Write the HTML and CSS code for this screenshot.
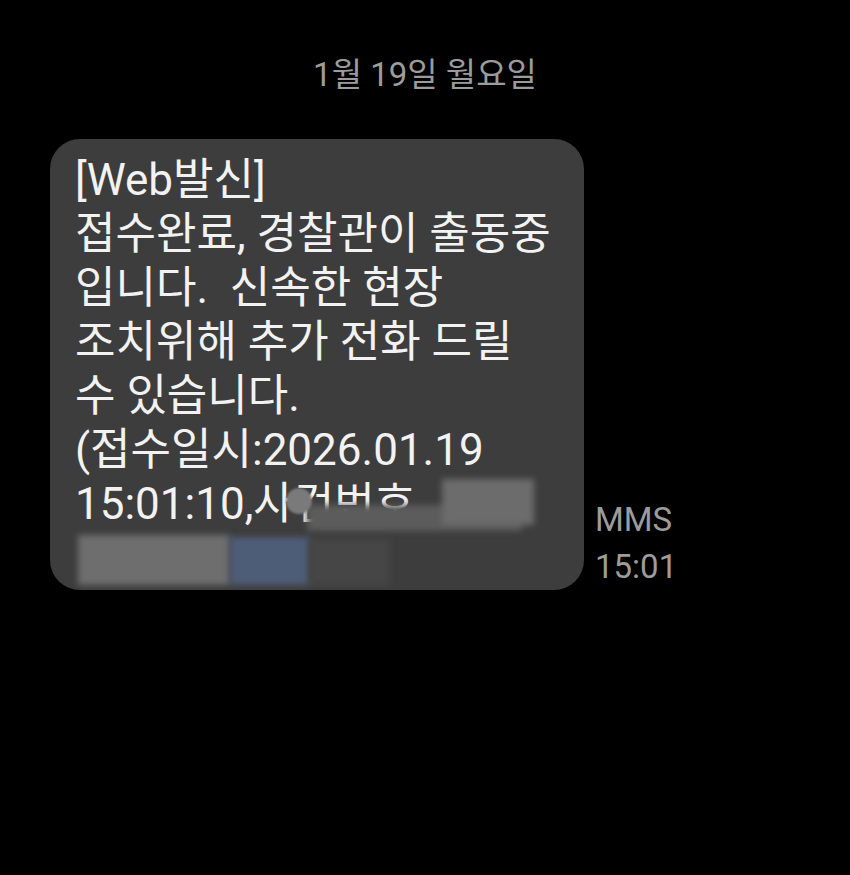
FILE: index.html
```html
<!DOCTYPE html>
<html lang="ko">
<head>
<meta charset="utf-8">
<link rel="stylesheet" href="styles.css">
</head>
<body>
<div class="screen">
  <div class="date">1월 19일 월요일</div>
  <div class="row">
    <div class="bubble">
      <div class="text">[Web발신]<br>접수완료, 경찰관이 출동중<br>입니다.&nbsp; 신속한 현장<br>조치위해 추가 전화 드릴<br>수 있습니다.<br>(접수일시:2026.01.19<br>15:01:10,사건번호<br>&nbsp;</div>
      <div class="blur b1"></div>
      <div class="blur b2"></div>
      <div class="blur b3"></div>
      <div class="blur b4"></div>
      <div class="blur b6"></div>
      <div class="blur b5"></div>
    </div>
    <div class="meta">MMS<br>15:01</div>
  </div>
</div>
</body>
</html>
```
FILE: styles.css
```css
html, body {
  margin: 0;
  padding: 0;
  background: #000;
}
.screen {
  width: 850px;
  height: 875px;
  background: #000;
  font-family: "Roboto", "Noto Sans CJK KR", sans-serif;
  overflow: hidden;
}
.date {
  text-align: center;
  color: #9c9c9c;
  font-size: 33px;
  line-height: 40px;
  padding-top: 55px;
  height: 84px;
  box-sizing: border-box;
}
.row {
  display: flex;
  align-items: flex-end;
  padding-left: 50px;
}
.bubble {
  position: relative;
  width: 534px;
  height: 451px;
  box-sizing: border-box;
  background: #3d3d3d;
  border-radius: 30px;
  padding: 14px 0 0 25px;
  overflow: hidden;
}
.date + .row {
  margin-top: 55px;
}
.text {
  color: #f2f2f2;
  font-size: 44px;
  line-height: 54px;
  white-space: nowrap;
}
.blur {
  position: absolute;
  filter: blur(3px);
}
.b1 {
  left: 257px; top: 366px; width: 215px; height: 26px;
  background: #5c5c5c;
}
.b2 {
  left: 392px; top: 340px; width: 92px; height: 46px;
  background: #6c6c6c;
}
.b3 {
  left: 28px; top: 396px; width: 152px; height: 50px;
  background: #6e6e6e;
}
.b4 {
  left: 180px; top: 398px; width: 80px; height: 48px;
  background: #4e5d77;
}
.b6 {
  left: 258px; top: 400px; width: 82px; height: 46px;
  background: #464646;
}
.b5 {
  left: 236px; top: 349px; width: 26px; height: 26px;
  border-radius: 50%;
  background: #7a7a7a;
  filter: blur(1px);
}
.meta {
  color: #9c9c9c;
  font-size: 33px;
  line-height: 47px;
  margin-left: 11px;
  margin-bottom: 0;
}
```
